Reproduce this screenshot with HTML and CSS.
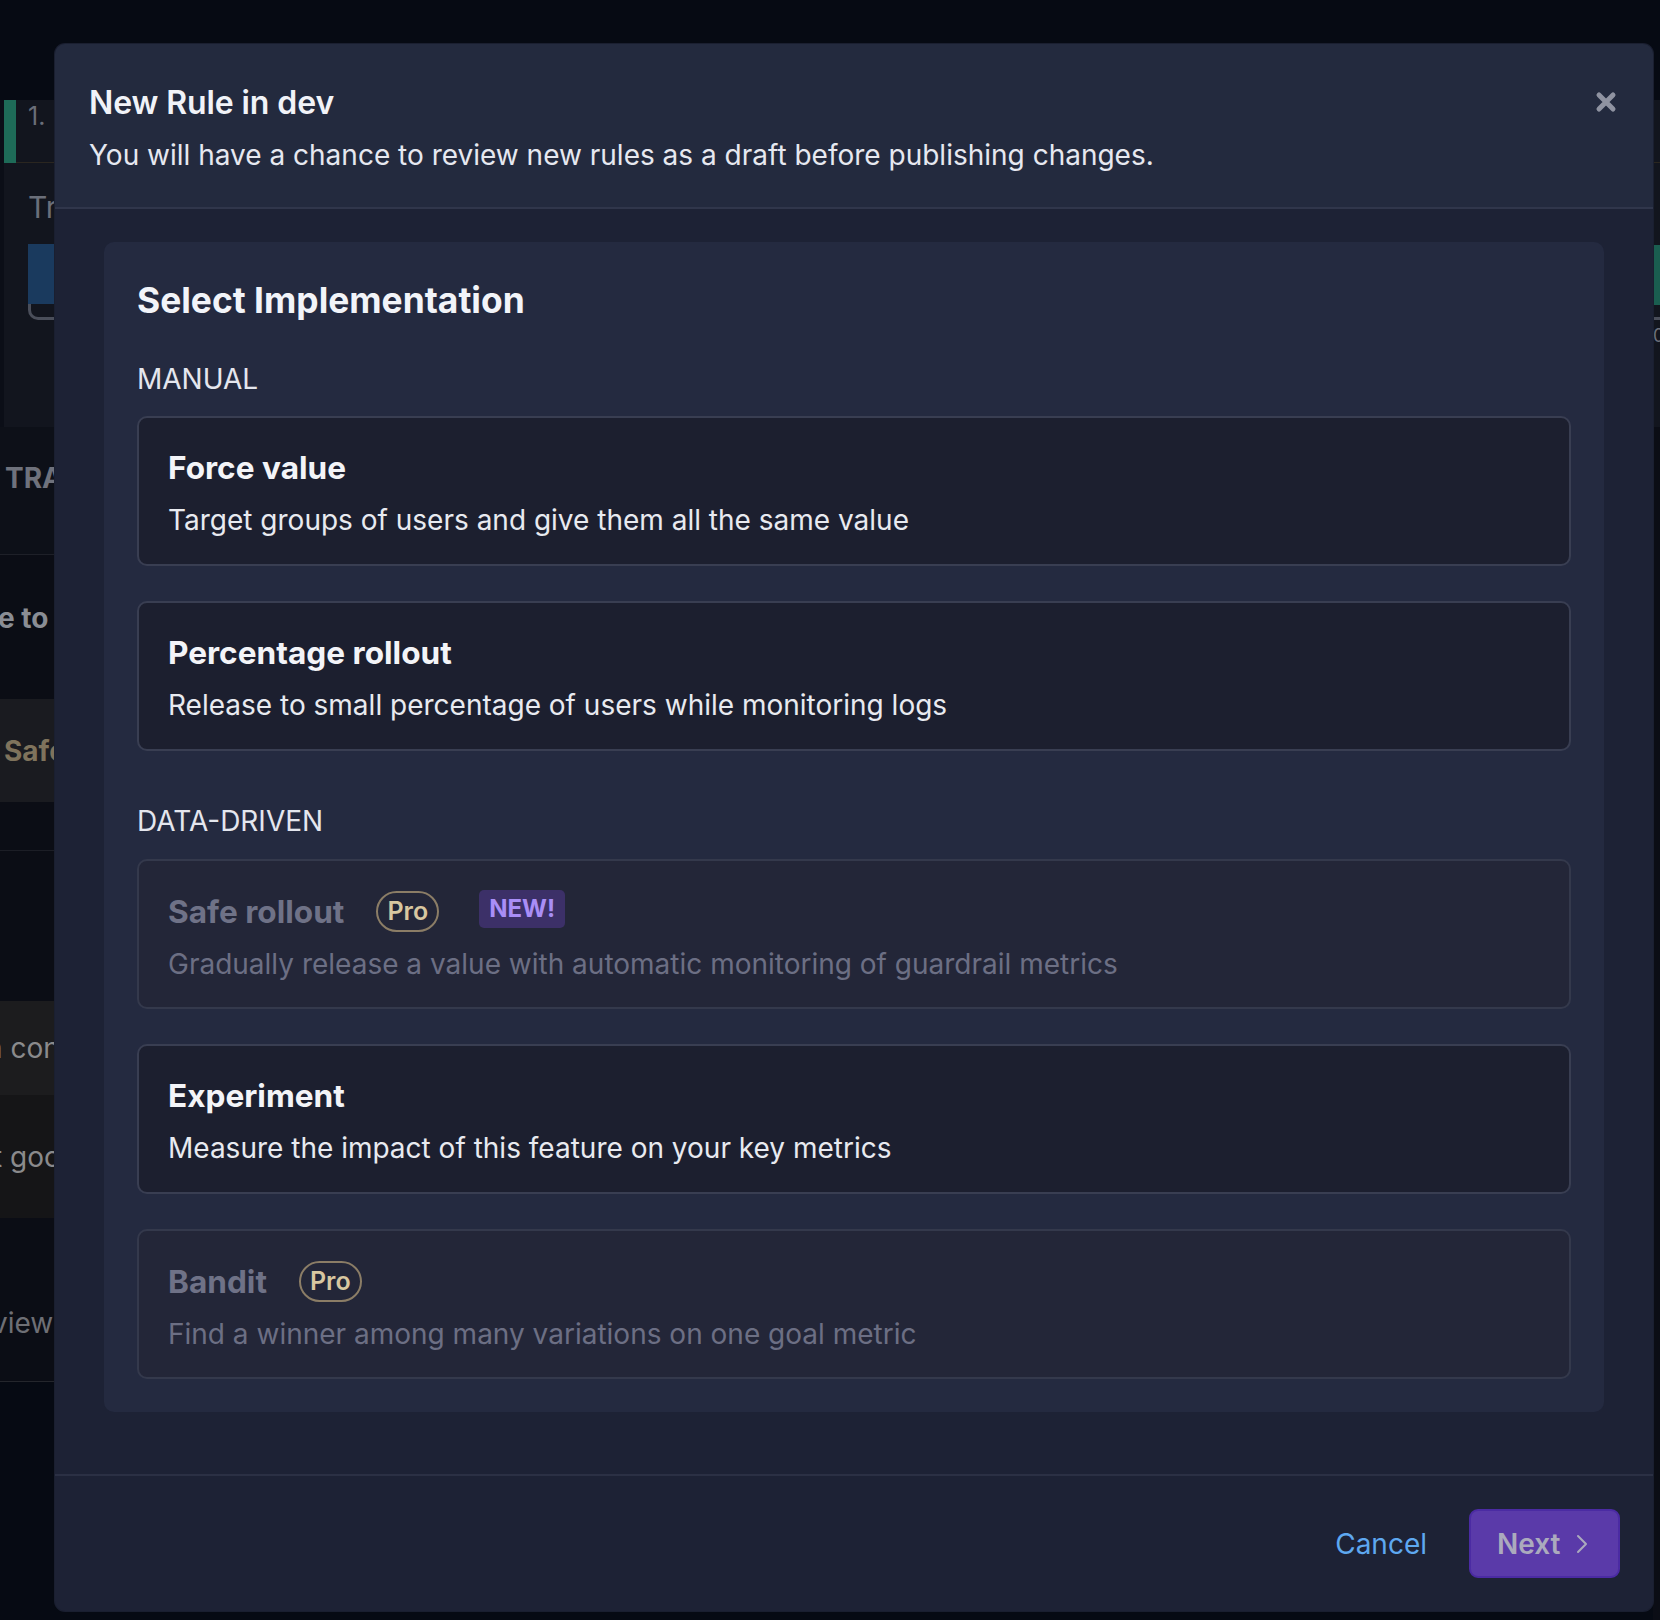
FILE: index.html
```html
<!DOCTYPE html>
<html lang="en">
<head>
<meta charset="utf-8">
<title>New Rule in dev</title>
<link rel="stylesheet" href="styles.css">
</head>
<body>
<div class="page">
  <aside class="bg-left">
    <div class="bl-top"></div>
    <div class="bl-panel">
      <div class="bl-row1"><span class="bl-green"></span><span class="bl-num">1.</span></div>
      <div class="bl-tr">Tr</div>
      <div class="bl-blue"></div>
      <div class="bl-blue-base"></div>
    </div>
    <div class="bl-row bl-tra"><span class="bl-bold">TRA</span></div>
    <div class="bl-row bl-eto"><span class="bl-bold bl-cut">e to</span></div>
    <div class="bl-row bl-safe"><span class="bl-bold bl-tan">Safe</span></div>
    <div class="bl-row bl-gap1"></div>
    <div class="bl-row bl-gap2"></div>
    <div class="bl-row bl-con"><span class="bl-cut-con">n con</span></div>
    <div class="bl-row bl-goo"><span class="bl-cut-goo">t goo</span></div>
    <div class="bl-row bl-view"><span class="bl-cut3">view</span></div>
    <div class="bl-rest"></div>
  </aside>
  <main class="bg-center"></main>
  <aside class="bg-right">
    <div class="br-top"></div>
    <div class="br-panel">
      <div class="br-row1"></div>
      <div class="br-green"></div>
      <div class="br-line"></div>
      <div class="br-text">0</div>
    </div>
    <div class="br-rest"></div>
  </aside>
</div>

<div class="modal" role="dialog" aria-label="New Rule in dev">
  <header class="modal-header">
    <div class="mh-text">
      <h1 class="mh-title">New Rule in dev</h1>
      <p class="mh-sub">You will have a chance to review new rules as a draft before publishing changes.</p>
    </div>
    <button class="close-btn" aria-label="Close">
      <svg width="22" height="22" viewBox="0 0 22 22"><path d="M4 4 L18 18 M18 4 L4 18" stroke="#8f93a1" stroke-width="5" stroke-linecap="round" fill="none"/></svg>
    </button>
  </header>

  <section class="modal-body">
    <div class="panel">
      <h2 class="panel-title">Select Implementation</h2>

      <div class="group-label label-manual">MANUAL</div>
      <div class="options">
        <div class="option">
          <div class="opt-title">Force value</div>
          <div class="opt-desc">Target groups of users and give them all the same value</div>
        </div>
        <div class="option">
          <div class="opt-title">Percentage rollout</div>
          <div class="opt-desc">Release to small percentage of users while monitoring logs</div>
        </div>
      </div>

      <div class="group-label label-data">DATA-DRIVEN</div>
      <div class="options">
        <div class="option disabled">
          <div class="opt-title">
            <span>Safe rollout</span>
            <span class="badge-pro">Pro</span>
            <span class="badge-new">NEW!</span>
          </div>
          <div class="opt-desc">Gradually release a value with automatic monitoring of guardrail metrics</div>
        </div>
        <div class="option">
          <div class="opt-title">Experiment</div>
          <div class="opt-desc">Measure the impact of this feature on your key metrics</div>
        </div>
        <div class="option disabled">
          <div class="opt-title">
            <span>Bandit</span>
            <span class="badge-pro pro-bandit">Pro</span>
          </div>
          <div class="opt-desc">Find a winner among many variations on one goal metric</div>
        </div>
      </div>
    </div>
  </section>

  <footer class="modal-footer">
    <button class="btn-cancel">Cancel</button>
    <button class="btn-next">Next
      <svg width="14" height="22" viewBox="0 0 14 22"><path d="M3 3 L11 11 L3 19" stroke="#abaabd" stroke-width="2" fill="none" stroke-linecap="round" stroke-linejoin="round"/></svg>
    </button>
  </footer>
</div>
</body>
</html>
```

FILE: styles.css
```css
* { box-sizing: border-box; }

html, body {
  margin: 0;
  padding: 0;
  width: 1660px;
  height: 1620px;
  overflow: hidden;
  background: #060a13;
  font-family: Inter, "Noto Sans", "Liberation Sans", sans-serif;
}

/* ---------- background page (behind the dialog) ---------- */
.page {
  display: flex;
  width: 1660px;
  height: 1620px;
}

.bg-left {
  width: 55px;
  display: flex;
  flex-direction: column;
  overflow: hidden;
  color: #6c707b;
  font-size: 28px;
  white-space: nowrap;
}

.bl-top { height: 100px; background: #060a13; flex: none; }

.bl-panel {
  height: 327px;
  flex: none;
  background: #12151e;
  border-left: 4px solid #0b0e17;
  display: flex;
  flex-direction: column;
}

.bl-row1 {
  height: 63px;
  display: flex;
  align-items: center;
  border-bottom: 1px solid #2a2620;
  flex: none;
}
.bl-green { width: 12px; height: 63px; background: #1e6b58; }
.bl-num { margin-left: 12px; font-size: 25px; color: #6a6e79; margin-top: -30px; }

.bl-tr { margin: 24px 0 0 24px; line-height: 40px; color: #6b6f7a; font-size: 30px; }

.bl-blue {
  margin: 17px 0 0 24px;
  height: 60px;
  background: #1a3a5e;
}
.bl-blue-base {
  margin-left: 24px;
  height: 16px;
  border: 3px solid #4a4e5a;
  border-top: none;
  border-right: none;
  border-radius: 0 0 0 10px;
}

.bl-row {
  flex: none;
  display: flex;
  align-items: center;
  overflow: hidden;
  line-height: 40px;
}
.bl-bold { font-weight: 700; }
.bl-tra {
  height: 128px;
  background: #0d1018;
  border-bottom: 1px solid #1e2028;
  padding: 31px 0 0 5px;
  align-items: flex-start;
  color: #6f727c;
}
.bl-eto {
  height: 144px;
  background: #0b0d15;
  color: #8a8d94;
  align-items: flex-start;
  padding-top: 43px;
}
.bl-cut { margin-left: -2px; }
.bl-safe { height: 103px; background: #1a1b20; padding-left: 4px; }
.bl-tan { color: #7f735c; }
.bl-gap1 { height: 49px; background: #0b0d15; border-bottom: 1px solid #1c1e26; }
.bl-gap2 { height: 150px; background: #0b0d15; }
.bl-con { height: 94px; background: #1c1c1e; color: #8a8a8c; }
.bl-cut-con { margin-left: -14px; }
.bl-goo { height: 123px; background: #151517; color: #8a8a8c; }
.bl-cut-goo { margin-left: -7px; }
.bl-view {
  height: 164px;
  background: #0b0d15;
  color: #6e6f75;
  border-bottom: 1px solid #24262c;
  align-items: flex-start;
  padding-top: 85px;
}
.bl-cut3 { margin-left: -8px; }
.bl-rest { flex: 1; background: #060a13; }

.bg-center { flex: 1; }

.bg-right {
  width: 7px;
  display: flex;
  flex-direction: column;
  overflow: hidden;
}
.br-top { height: 100px; background: #060a13; flex: none; }
.br-panel { height: 327px; background: #12151e; flex: none; display: flex; flex-direction: column; }
.br-row1 { height: 63px; border-bottom: 1px solid #2a2620; flex: none; }
.br-green { margin-top: 82px; height: 60px; background: #1a5e50; flex: none; }
.br-line { margin-top: 12px; height: 3px; background: #4a4e5a; flex: none; }
.br-text { font-size: 18px; color: #6c707b; line-height: 20px; margin-top: 6px; }
.br-rest { flex: 1; background: #0b0d15; }

/* ---------- dialog ---------- */
.modal {
  position: absolute;
  left: 55px;
  top: 44px;
  width: 1598px;
  height: 1567px;
  background: #1d2235;
  border-radius: 10px;
  overflow: hidden;
  display: flex;
  flex-direction: column;
  box-shadow: 0 0 0 1px #1a1f30;
}

.modal-header {
  background: #232a3e;
  border-bottom: 2px solid #30364b;
  padding: 39px 34px 32px 34px;
  display: flex;
  justify-content: space-between;
  align-items: flex-start;
  flex: none;
}

.mh-title {
  margin: 0;
  font-size: 32px;
  line-height: 40px;
  font-weight: 600;
  color: #f1f3f8;
  letter-spacing: -0.1px;
}

.mh-sub {
  margin: 12px 0 0 0;
  font-size: 28px;
  line-height: 40px;
  color: #e6e8f0;
  font-weight: 400;
}

.close-btn {
  background: none;
  border: none;
  padding: 0;
  margin: 8px 2px 0 0;
  width: 22px;
  height: 22px;
  display: flex;
  cursor: pointer;
}

.modal-body {
  flex: 1;
  padding: 33px 49px 0 49px;
}

.panel {
  background: #242a40;
  border-radius: 10px;
  padding: 37px 33px 33px 33px;
}

.panel-title {
  margin: 0;
  font-size: 35.4px;
  line-height: 44px;
  font-weight: 700;
  color: #f2f4f9;
}

.group-label {
  font-size: 28px;
  line-height: 36px;
  color: #e4e6ee;
  font-weight: 400;
}
.label-manual { margin-top: 38px; margin-bottom: 19px; }
.label-data { margin-top: 52px; margin-bottom: 20px; }

.options {
  display: flex;
  flex-direction: column;
  gap: 35px;
}

.option {
  background: #1c1f2f;
  border: 2px solid #393e52;
  border-radius: 10px;
  padding: 30px 31px 24px 29px;
  height: 150px;
}

.opt-title {
  font-size: 31.6px;
  line-height: 40px;
  font-weight: 700;
  color: #f3f4f8;
  display: flex;
  align-items: center;
}

.opt-desc {
  margin-top: 12px;
  font-size: 28px;
  line-height: 40px;
  color: #e8eaf0;
  font-weight: 400;
}

.option.disabled {
  background: #232638;
  border-color: #34394c;
}
.option.disabled .opt-title { color: #6f7287; }
.option.disabled .opt-desc { color: #6c6f84; }

.badge-pro {
  margin-left: 32px;
  height: 41px;
  padding: 0 9px;
  border: 2px solid #8b7d66;
  border-radius: 21px;
  color: #d8c7a0;
  font-size: 25px;
  font-weight: 600;
  display: inline-flex;
  align-items: center;
  line-height: 1;
}
.pro-bandit { margin-left: 32px; }

.badge-new {
  margin-left: 40px;
  height: 38px;
  padding: 0 10px;
  background: #3c3068;
  border-radius: 5px;
  color: #a98ef7;
  font-size: 24px;
  font-weight: 700;
  display: inline-flex;
  align-items: center;
  margin-top: -5px;
  line-height: 1;
}

.modal-footer {
  flex: none;
  border-top: 2px solid #2b3044;
  padding: 33px 33px 33px 33px;
  display: flex;
  justify-content: flex-end;
  align-items: center;
  gap: 30px;
  margin-top: 62px;
}

.btn-cancel {
  background: none;
  border: none;
  color: #5ea8f0;
  font-family: inherit;
  font-size: 28px;
  font-weight: 400;
  padding: 0 12px;
  cursor: pointer;
}

.btn-next {
  width: 151px;
  height: 69px;
  background: #5a3aa9;
  border: 2px solid #4b2ba3;
  border-radius: 9px;
  color: #abaabd;
  font-family: inherit;
  font-size: 28px;
  font-weight: 600;
  display: flex;
  align-items: center;
  padding: 0 0 0 26px;
  gap: 14px;
  cursor: pointer;
}
```
